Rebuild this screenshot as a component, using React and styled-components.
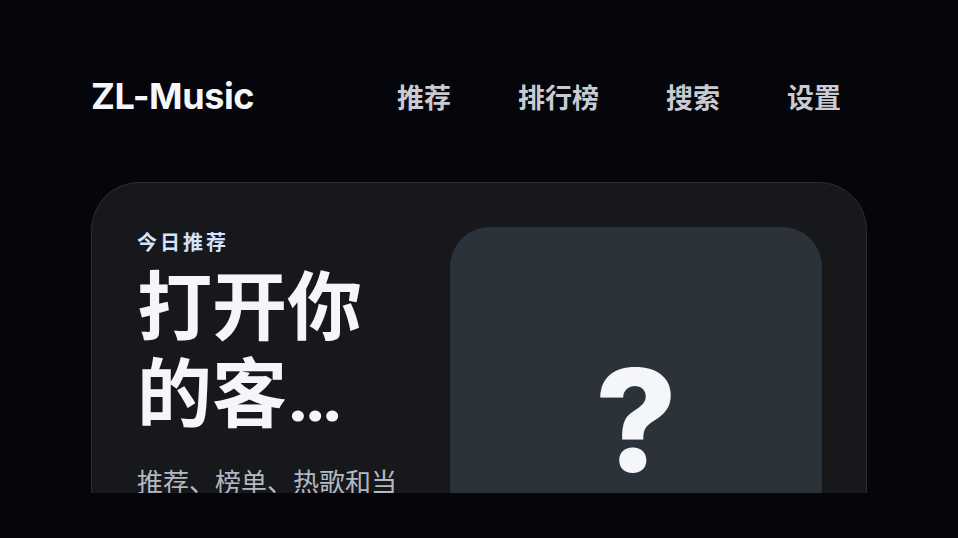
import React from "react";
import styled, { createGlobalStyle } from "styled-components";

const GlobalStyle = createGlobalStyle`
  html, body { margin: 0; padding: 0; background: #05060b; }
  body { font-family: Inter, "Noto Sans CJK SC", sans-serif; color: #f5f6fa; }
  * { box-sizing: border-box; }
`;

const Page = styled.div`
  height: 100vh;
  display: flex;
  flex-direction: column;
  padding: 0 91px 45px;
  overflow: hidden;
`;

const Header = styled.header`
  flex: none;
  height: 182px;
  display: flex;
  align-items: center;
  justify-content: space-between;
  padding-top: 10px;
`;

const Logo = styled.div`
  font-family: Inter, sans-serif;
  font-weight: 700;
  font-size: 36px;
  letter-spacing: -0.4px;
  color: #f5f6fa;
`;

const Nav = styled.nav`
  display: flex;
  gap: 15px;
`;

const NavLink = styled.a`
  padding: 6px 26px;
  font-family: "Noto Sans CJK SC", sans-serif;
  font-weight: 700;
  font-size: 27px;
  color: #c9cbd3;
  cursor: pointer;
`;

const Main = styled.main`
  flex: 1;
  min-height: 0;
  overflow: hidden;
`;

const Hero = styled.section`
  display: grid;
  grid-template-columns: 1fr 372px;
  gap: 44px;
  padding: 44px 44px 44px 45px;
  background: #17181c;
  border: 1px solid #2c2e33;
  border-radius: 48px;
`;

const Info = styled.div`
  display: flex;
  flex-direction: column;
  min-width: 0;
`;

const Eyebrow = styled.div`
  font-family: "Noto Sans CJK SC", sans-serif;
  font-weight: 700;
  font-size: 20px;
  letter-spacing: 3px;
  color: #d6e2fb;
  line-height: 30px;
`;

const Title = styled.h1`
  margin: 8px 0 0;
  font-family: Roboto, "Noto Sans CJK SC", sans-serif;
  font-weight: 700;
  font-size: 75px;
  line-height: 87px;
  color: #f5f6fa;
  display: -webkit-box;
  -webkit-line-clamp: 2;
  -webkit-box-orient: vertical;
  overflow: hidden;
`;

const Desc = styled.p`
  margin: 22px 0 0;
  font-family: "Noto Sans CJK SC", sans-serif;
  font-size: 26px;
  line-height: 1.5;
  color: #b4b8c1;
`;

const Cover = styled.div`
  aspect-ratio: 1 / 1;
  border-radius: 40px;
  background: #2c323a;
  display: flex;
  align-items: center;
  justify-content: center;
`;

const CoverMark = styled.span`
  font-family: Inter, sans-serif;
  font-weight: 800;
  font-size: 142px;
  line-height: 1;
  color: #f5f6fa;
  margin-top: 14px;
`;

export default function App() {
  return (
    <>
      <GlobalStyle />
      <Page>
        <Header>
          <Logo>ZL-Music</Logo>
          <Nav>
            <NavLink>推荐</NavLink>
            <NavLink>排行榜</NavLink>
            <NavLink>搜索</NavLink>
            <NavLink>设置</NavLink>
          </Nav>
        </Header>
        <Main>
          <Hero>
            <Info>
              <Eyebrow>今日推荐</Eyebrow>
              <Title>打开你的客户端，开始聆听</Title>
              <Desc>推荐、榜单、热歌和当下流行的音乐，一站式呈现。</Desc>
            </Info>
            <Cover>
              <CoverMark>?</CoverMark>
            </Cover>
          </Hero>
        </Main>
      </Page>
    </>
  );
}
